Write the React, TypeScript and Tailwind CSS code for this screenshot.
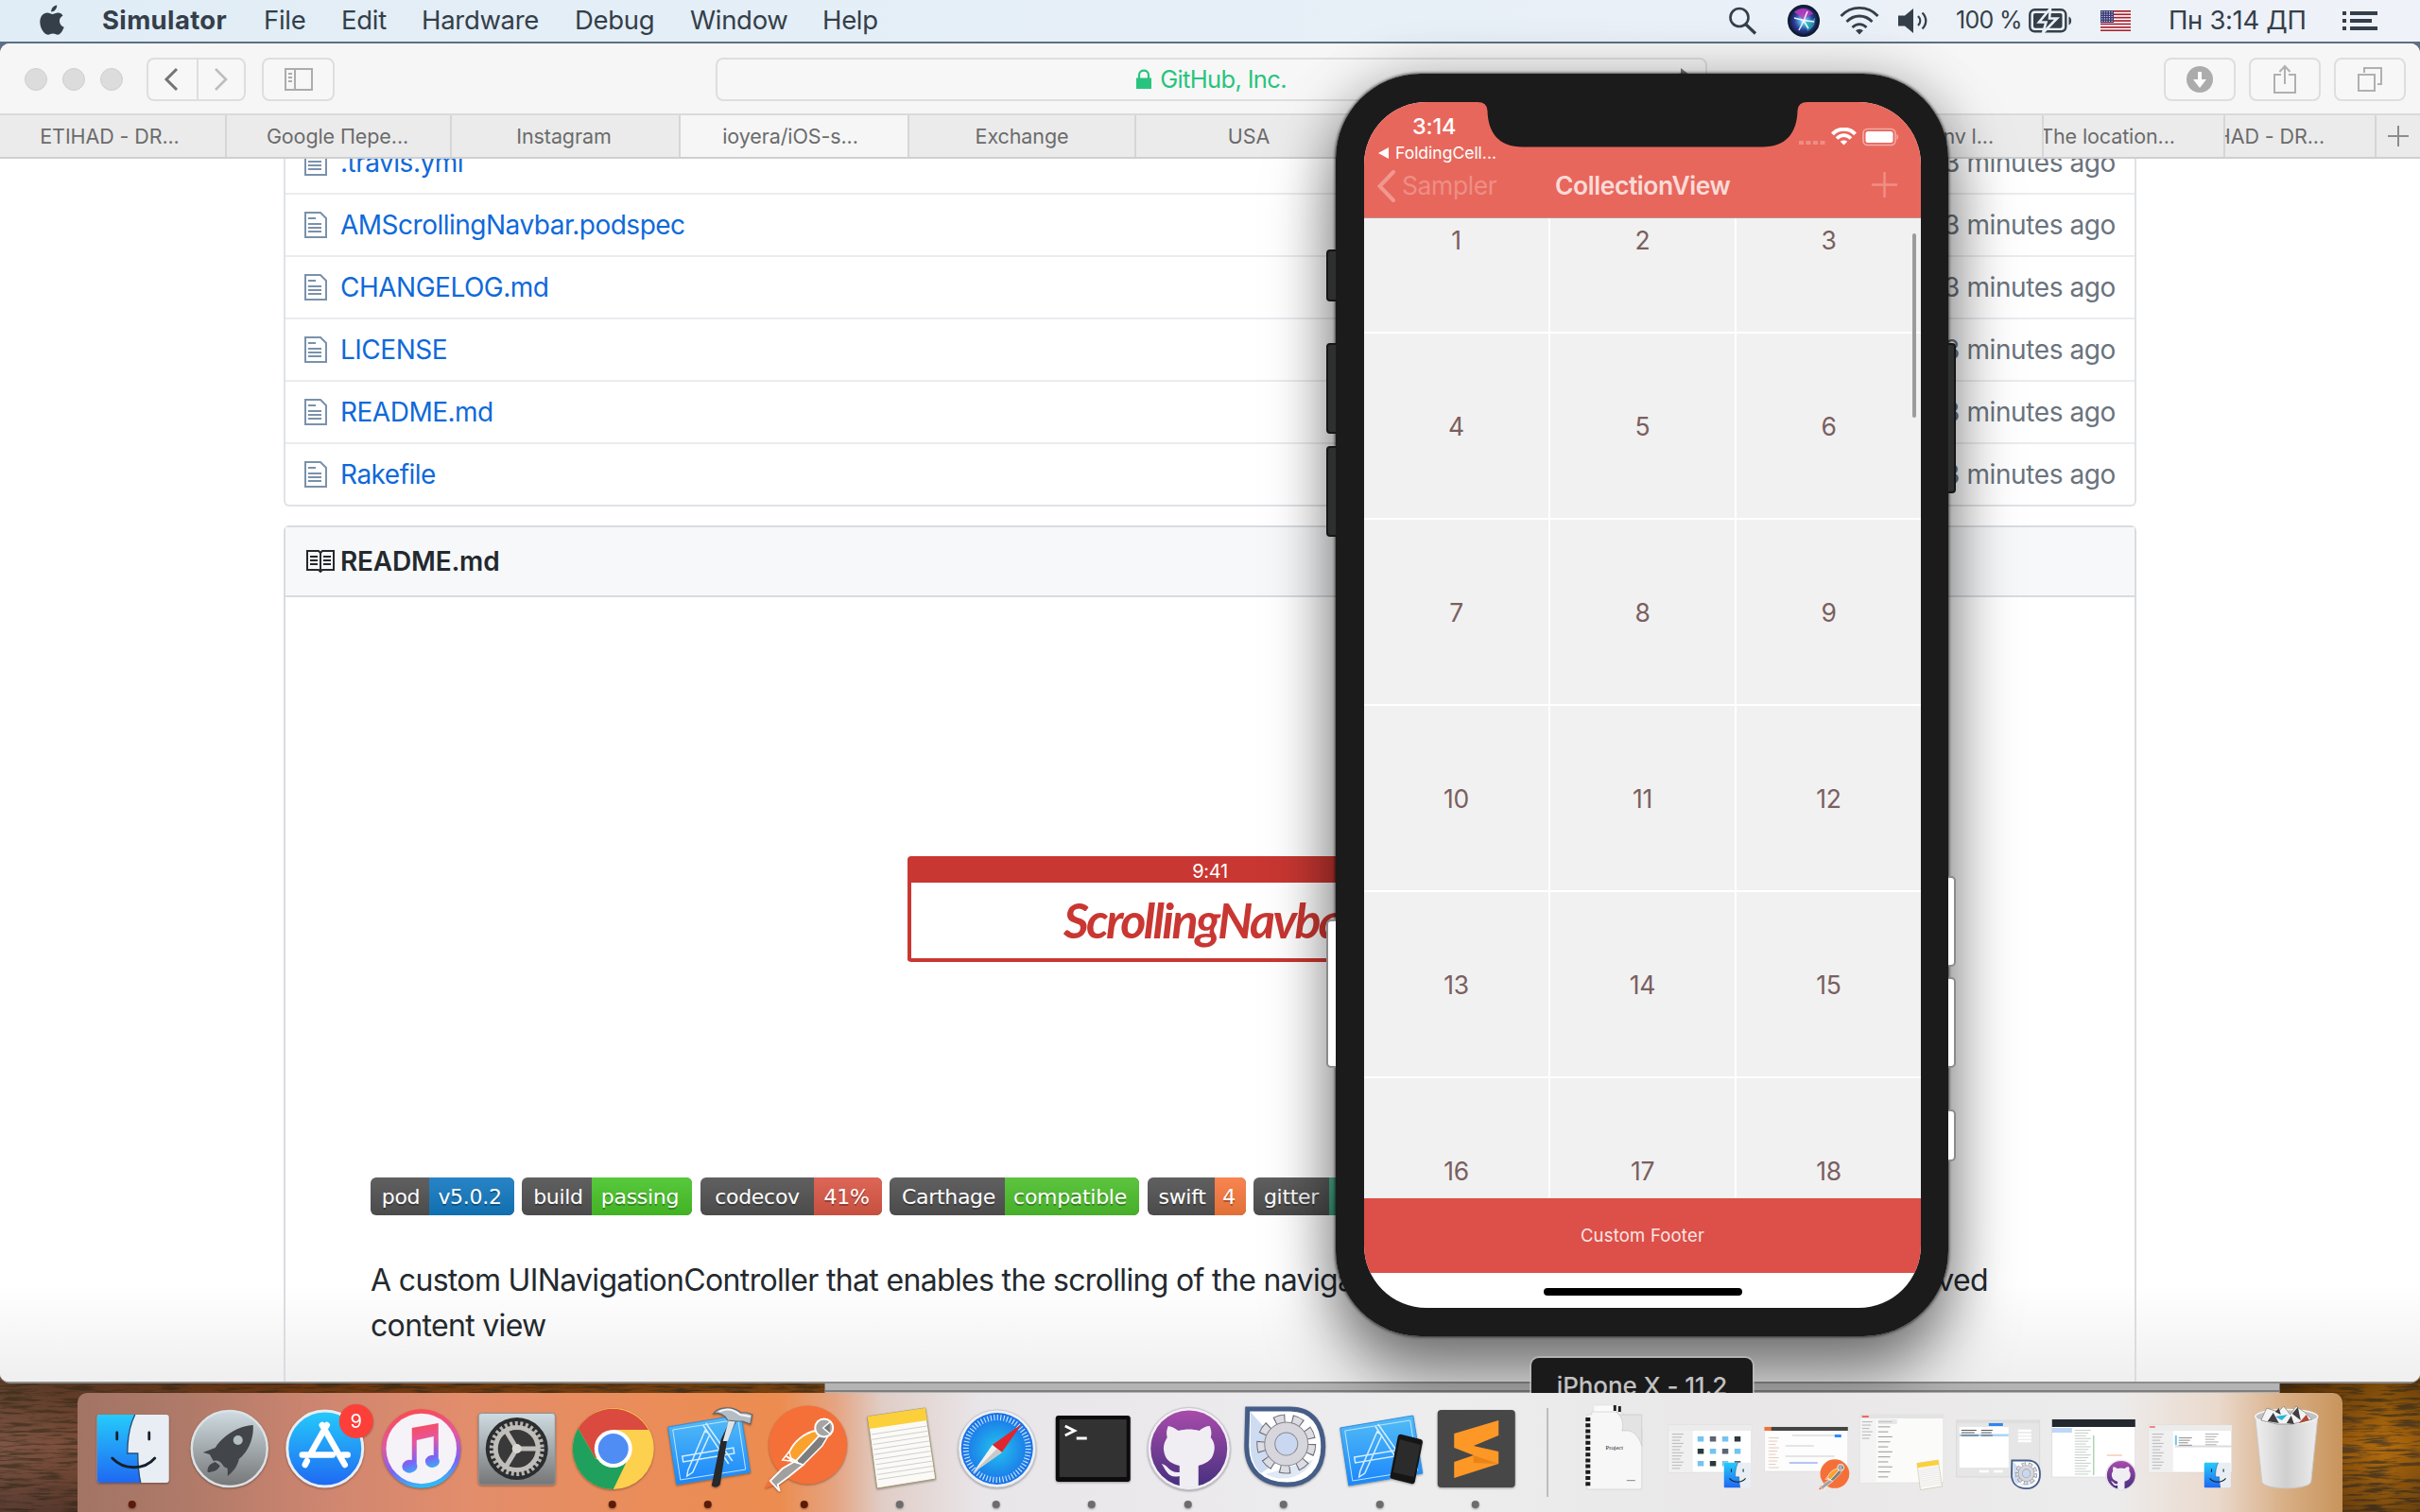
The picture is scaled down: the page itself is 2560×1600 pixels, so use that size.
import React from "react";

const files = [
  ".travis.yml",
  "AMScrollingNavbar.podspec",
  "CHANGELOG.md",
  "LICENSE",
  "README.md",
  "Rakefile",
];

const menus = [
  { label: "File", cls: "w-[82px]" },
  { label: "Edit", cls: "w-[85px]" },
  { label: "Hardware", cls: "w-[162px]" },
  { label: "Debug", cls: "w-[122px]" },
  { label: "Window", cls: "w-[140px]" },
  { label: "Help", cls: "w-[80px]" },
];

function MenuBar() {
  return (
    <div className="relative flex h-[46px] items-center border-b-2 border-[#5d6f84] bg-linear-to-r from-[#e1edf6] via-[#e6eff7] to-[#eff2f8] text-[27.5px] tracking-[-0.3px] text-[#343f4a]">
      <svg className="ml-[41px] h-[34px] w-[28px] shrink-0" viewBox="0 0 28 34" fill="#343f4a">
        <path d="M19.2 0.5c.3 3.600-2.700 7-6 7-.5-3.300 2.700-6.700 6-7z" />
        <path d="M25.500 11.500c-2.300 1.400-3.600 3.200-3.500 6 .1 3 1.800 5 4.700 6.200-1.200 3.200-3.600 8-6.700 8-2 0-2.700-1.200-5-1.200s-3.200 1.200-5 1.200C6.300 31.700 1.300 25.500 1.300 18.200c0-6 3.700-9.700 7.700-9.700 2.300 0 4 1.500 5.600 1.500 1.500 0 3.400-1.600 6.100-1.500 2 .1 3.700 1 4.800 3z" />
      </svg>
      <span className="ml-[39px] w-[171px] font-bold tracking-[0.35px]">Simulator</span>
      {menus.map((m) => (
        <span key={m.label} className={m.cls}>
          {m.label}
        </span>
      ))}
      <div className="ml-auto flex items-center">
        <svg className="h-[30px] w-[32px]" viewBox="0 0 32 30" fill="none" stroke="#343f4a" strokeWidth="2.600">
          <circle cx="13" cy="11.500" r="9.500" />
          <path d="M19.500 18.500 30 28.500" strokeWidth="3.200" />
        </svg>
        <svg className="ml-[32px] h-[34px] w-[34px]" viewBox="0 0 34 34">
          <defs>
            <radialGradient id="siri" cx="0.5" cy="0.5" r="0.5">
              <stop offset="0" stopColor="#e8f6ff" />
              <stop offset="0.25" stopColor="#4fb6e8" />
              <stop offset="0.600" stopColor="#2f3f9c" />
              <stop offset="1" stopColor="#0f1838" />
            </radialGradient>
          </defs>
          <circle cx="17" cy="17" r="16" fill="url(#siri)" stroke="#101c30" strokeWidth="2" />
          <path d="M7 8c6-6 16-5 20 2-5 1-8 4-10 7-3-4-6-7-10-9z" fill="#c03ac0" opacity="0.850" />
          <path d="M17 17c4 1 8 0 12-3 1 6-3 12-8 14-2-3-3-7-4-11z" fill="#2fc8b8" opacity="0.600" />
          <path d="M7 14 17 16.500 28 18M21 7 17 17 12 27M17 17l5 8" stroke="#fff" strokeWidth="1.500" opacity="0.900" fill="none" />
        </svg>
        <svg className="ml-[20px] h-[32px] w-[44px]" viewBox="0 0 44 32" fill="none" stroke="#343f4a" strokeWidth="2.800">
          <path d="M2.500 11C13 -0.500 31 -0.500 41.500 11" />
          <path d="M8.500 17c7.500-8 19.500-8 27 0" />
          <path d="M14.500 23c4.500-4.500 10.500-4.500 15 0" />
          <path d="M22 30.500l-4-4.200c2.500-2 5.500-2 8 0z" fill="#343f4a" stroke="none" />
        </svg>
        <svg className="ml-[18px] h-[28px] w-[36px]" viewBox="0 0 36 28">
          <path d="M1 8.500h7L17 1v26L8 19.500H1z" fill="#343f4a" />
          <path d="M22 9c3 3 3 7 0 10M26.500 5.500c5 5 5 12 0 17" fill="none" stroke="#343f4a" strokeWidth="2.300" />
        </svg>
        <span className="ml-[26px] w-[77px] text-[25px] tracking-[-0.7px] whitespace-nowrap">100 %</span>
        <svg className="h-[26px] w-[48px]" viewBox="0 0 48 26">
          <rect x="1.300" y="1.300" width="38" height="23" rx="5" fill="none" stroke="#343f4a" strokeWidth="2.400" />
          <rect x="5" y="5" width="30.500" height="15.800" rx="2" fill="#343f4a" />
          <path d="M42.500 8.500c3.500 1 3.500 8 0 9z" fill="#343f4a" />
          <path d="M23 0 11 14.500h7.500L15 26l15-15.500h-8z" fill="#343f4a" stroke="#eaf0f7" strokeWidth="2.600" />
        </svg>
        <svg className="ml-[28px] h-[22px] w-[32px]" viewBox="0 0 32 22">
          <rect width="32" height="22" fill="#fff" />
          {[0, 1, 2, 3, 4, 5, 6].map((i) => (
            <rect key={i} y={i * 3.4} width="32" height="1.700" fill="#a8202f" />
          ))}
          <rect width="14" height="13" fill="#3a3a78" />
          {[0, 1, 2, 3, 4].map((r) =>
            [0, 1, 2, 3, 4].map((c) => <circle key={`${r}-${c}`} cx={1.7 + c * 2.6} cy={1.7 + r * 2.4} r="0.600" fill="#fff" />)
          )}
        </svg>
        <span className="ml-[40px] w-[184px] text-[27.5px] tracking-[-0.35px] whitespace-nowrap">Пн 3:14 ДП</span>
        <svg className="mr-[45px] h-[22px] w-[37px]" viewBox="0 0 37 22" fill="#343f4a">
          <path d="M0 1h4v4H0zM0 9h4v4H0zM0 17h4v4H0zM8 1h29v4H8zM8 9h23v4H8zM8 17h29v4H8z" />
        </svg>
      </div>
    </div>
  );
}

function Toolbar() {
  const btn = "flex h-[46px] items-center justify-center rounded-[8px] border-2 border-[#dedede] bg-[#f7f7f7]";
  return (
    <div className="relative flex h-[74px] items-center bg-[#f6f6f6] pt-[2px]">
      <div className="ml-[26px] flex gap-[16px]">
        {[0, 1, 2].map((i) => (
          <div key={i} className="h-[24px] w-[24px] rounded-full border border-[#cfcfcf] bg-[#dcdcdc]" />
        ))}
      </div>
      <div className={`${btn} ml-[25px] w-[53px] rounded-r-none border-r-0 pr-[3px]`}>
        <svg className="h-[26px] w-[16px]" viewBox="0 0 16 26" fill="none" stroke="#747474" strokeWidth="3">
          <path d="M14 2 3 13l11 11" />
        </svg>
      </div>
      <div className={`${btn} w-[52px] rounded-l-none`}>
        <svg className="h-[26px] w-[16px]" viewBox="0 0 16 26" fill="none" stroke="#bdbdbd" strokeWidth="2.600">
          <path d="m2 2 11 11L2 24" />
        </svg>
      </div>
      <div className={`${btn} ml-[17px] w-[77px]`}>
        <svg className="h-[24px] w-[30px]" viewBox="0 0 30 24" fill="none" stroke="#acacac" strokeWidth="2">
          <path d="M1 1h28v22H1zM11 1v22M4 6h4M4 10h4M4 14h4" />
        </svg>
      </div>
      <div className={`${btn} absolute top-[15px] left-[757px] w-[1049px] text-[25.5px] tracking-[-0.65px] text-[#28c47d]`}>
        <svg className="mr-[9px] h-[22px] w-[16px]" viewBox="0 0 16 22">
          <path d="M0 9.500h16V21H0z" fill="#28c47d" />
          <path d="M3 10V6.500C3 0 13 0 13 6.500V10" fill="none" stroke="#28c47d" strokeWidth="2.200" />
        </svg>
        GitHub, Inc.
        <svg className="absolute top-[8px] right-[16px] h-[22px] w-[20px]" viewBox="0 0 20 22">
          <path d="M10 1l9 7-9 7z" fill="#777" />
          <path d="M12 7.500c-6 0-10 4-10 9" fill="none" stroke="#777" strokeWidth="2.600" />
        </svg>
      </div>
      <div className="mr-[15px] ml-auto flex gap-[14px]">
        <div className={`${btn} w-[76px]`}>
          <svg className="h-[28px] w-[28px]" viewBox="0 0 28 28">
            <circle cx="14" cy="14" r="14" fill="#acacac" />
            <path d="M12 6h4v8h5l-7 9-7-9h5z" fill="#fff" />
          </svg>
        </div>
        <div className={`${btn} w-[76px]`}>
          <svg className="h-[32px] w-[24px]" viewBox="0 0 24 32" fill="none" stroke="#b0b0b0" strokeWidth="2">
            <path d="M8 11H1v19h22V11h-7M12 21V2M6.500 8 12 2l5.500 6" />
          </svg>
        </div>
        <div className={`${btn} w-[76px]`}>
          <svg className="h-[26px] w-[26px]" viewBox="0 0 26 26" fill="none" stroke="#b0b0b0" strokeWidth="2">
            <path d="M1 8h17v17H1zM7 6V1h18v17h-4" />
          </svg>
        </div>
      </div>
    </div>
  );
}

function TabBar() {
  const tab = "flex h-full shrink-0 items-center justify-center overflow-hidden whitespace-nowrap border-r-2 border-[#d6d6d6]";
  return (
    <div className="flex h-[48px] border-y-2 border-t-[#dadada] border-b-[#cfcfcf] bg-[#ebebeb] text-[21.5px] tracking-[-0.1px] text-[#6b6b6b]">
      <div className={`${tab} w-[240px] pr-[6px]`}>ETIHAD - DR...</div>
      <div className={`${tab} w-[238px] pr-[2px]`}>Google Пере...</div>
      <div className={`${tab} w-[242px] pr-[3px]`}>Instagram</div>
      <div className={`${tab} w-[242px] bg-[#f6f6f6] pr-[8px]`}>ioyera/iOS-s...</div>
      <div className={`${tab} w-[240px]`}>Exchange</div>
      <div className={`${tab} w-[240px]`}>USA</div>
      <div className={`${tab} w-[720px] justify-end pr-[51px]`}>env l...</div>
      <div className={`${tab} w-[192px] pr-[55px]`}>The location...</div>
      <div className={`${tab} w-[160px] justify-end pr-[53px]`}>ETIHAD - DR...</div>
      <div className="flex flex-1 items-center justify-center">
        <svg className="h-[22px] w-[22px]" viewBox="0 0 22 22" stroke="#8c8c8c" strokeWidth="2">
          <path d="M11 0v22M0 11h22" />
        </svg>
      </div>
    </div>
  );
}

function Badge({ left, right, lw, rw, color }: { left: string; right: string; lw: string; rw: string; color: string }) {
  return (
    <div className="flex h-[40px] overflow-hidden rounded-[6px] bg-linear-to-b from-[#606060] to-[#4b4b4b] font-['DejaVu_Sans'] text-[22px] tracking-[-0.3px] text-white [text-shadow:0_2px_0_rgba(0,0,0,0.3)]">
      <div className={`flex items-center justify-center ${lw}`}>{left}</div>
      <div className={`flex items-center justify-center bg-linear-to-b ${rw} ${color}`}>{right}</div>
    </div>
  );
}

function Page() {
  return (
    <div className="flex h-[1294px] flex-col overflow-hidden bg-linear-to-b from-white from-[92%] to-[#efefef] px-[300px] text-[28px]">
      <div className="mt-[-30px] shrink-0 rounded-b-[6px] border-2 border-t-0 border-[#dfe2e5]">
        {files.map((f) => (
          <div key={f} className="flex h-[66px] items-center border-t-2 border-[#eaecef] pr-[20px] pl-[20px] last:h-[66px]">
            <svg className="h-[28px] w-[24px]" viewBox="0 0 24 28" fill="none" stroke="#7a91ab" strokeWidth="2">
              <path d="M2 1h15l6 6v20H1V1zM4 7h8M4 13h14M4 17h14M4 21h14" />
            </svg>
            <span className="ml-[14px] tracking-[-0.5px] text-[#0f69d9]">{f}</span>
            <span className="ml-auto tracking-[-0.4px] text-[#6a737d]">3 minutes ago</span>
          </div>
        ))}
      </div>
      <div className="mt-[20px] flex flex-1 shrink-0 flex-col rounded-t-[6px] border-2 border-b-0 border-[#d9dcdf]">
        <div className="flex h-[74px] items-center border-b-2 border-[#d9dcdf] bg-[#f6f8fa] pl-[22px]">
          <svg className="h-[24px] w-[30px]" viewBox="0 0 30 24" fill="none" stroke="#24292e" strokeWidth="2">
            <path d="M1 1h12l2 2 2-2h12v20H17l-2 2-2-2H1zM15 3v19M4 7h8M4 11h8M4 15h8M18 7h8M18 11h8M18 15h8" />
          </svg>
          <span className="ml-[6px] font-semibold tracking-[-0.2px] text-[#24292e]">README.md</span>
        </div>
        <div className="mt-[274px] flex h-[112px] w-[640px] shrink-0 flex-col self-center rounded-[4px] border-4 border-t-0 border-[#c93732] bg-white">
          <div className="flex h-[28px] items-center justify-center bg-[#c93732] pt-[3px] text-[20px] tracking-[-0.3px] text-white">9:41</div>
          <div className="flex flex-1 items-center justify-center pb-[2px] font-['Lato'] text-[52px] leading-none font-bold tracking-[-2.6px] text-[#c93732] italic">ScrollingNavbar</div>
        </div>
        <div className="mt-[228px] ml-[90px] flex">
          <Badge left="pod" right="v5.0.2" lw="w-[62px] pl-[2px]" rw="w-[90px] pr-[4px]" color="from-[#2884c6] to-[#106fae]" />
          <div className="w-[8px]" />
          <Badge left="build" right="passing" lw="w-[74px] pl-[3px]" rw="w-[106px] pr-[4px]" color="from-[#58c83c] to-[#42b224]" />
          <div className="w-[9px]" />
          <Badge left="codecov" right="41%" lw="w-[120px]" rw="w-[72px] pr-[3px]" color="from-[#dd6657] to-[#c65040]" />
          <div className="w-[8px]" />
          <Badge left="Carthage" right="compatible" lw="w-[122px] pl-[3px]" rw="w-[142px] pr-[4px]" color="from-[#5cc43e] to-[#48ae2a]" />
          <div className="w-[9px]" />
          <Badge left="swift" right="4" lw="w-[71px] pl-[2px]" rw="w-[33px] pr-[3px]" color="from-[#f9844f] to-[#e07038]" />
          <div className="w-[8px]" />
          <Badge left="gitter" right="join chat" lw="w-[80px]" rw="w-[110px]" color="from-[#4fb393] to-[#3b9c7c]" />
        </div>
        <p className="mt-[45px] ml-[90px] w-[1776px] text-[32px] leading-[48px] tracking-[-0.66px] text-[#24292e]">
          A custom UINavigationController that enables the scrolling of the navigation bar alongside the scrolling of an observed content view
        </p>
      </div>
    </div>
  );
}

function Phone() {
  return (
    <div className="absolute top-[78px] left-[1413px] h-[1336px] w-[648px]">
      <div className="absolute inset-0 rounded-[90px] shadow-[0_0_3px_1px_rgba(0,0,0,0.6),0_40px_70px_rgba(0,0,0,0.5),0_0_60px_rgba(0,0,0,0.2)]" />
      <div className="absolute top-[186px] left-[-10px] h-[55px] w-[14px] rounded-[4px] border-2 border-[#161616] bg-[#2e2f2f]" />
      <div className="absolute top-[285px] left-[-10px] h-[96px] w-[14px] rounded-[4px] border-2 border-[#161616] bg-[#2e2f2f]" />
      <div className="absolute top-[394px] left-[-10px] h-[96px] w-[14px] rounded-[4px] border-2 border-[#161616] bg-[#2e2f2f]" />
      <div className="absolute top-[285px] right-[-8px] h-[159px] w-[14px] rounded-[4px] border-2 border-[#161616] bg-[#2e2f2f]" />
      <div className="absolute top-[895px] left-[-10px] h-[157px] w-[20px] rounded-[5px] border-2 border-[#8a8a8a] bg-white" />
      <div className="absolute top-[849px] right-[-8px] h-[96px] w-[20px] rounded-[5px] border-2 border-[#8a8a8a] bg-white" />
      <div className="absolute top-[956px] right-[-8px] h-[96px] w-[20px] rounded-[5px] border-2 border-[#8a8a8a] bg-white" />
      <div className="absolute top-[1096px] right-[-8px] h-[55px] w-[20px] rounded-[5px] border-2 border-[#8a8a8a] bg-white" />
      <div className="relative h-full rounded-[90px] bg-[#1b1b1b] px-[30px] pt-[30px]">
        <div className="relative flex h-[1276px] w-[589px] flex-col overflow-hidden rounded-[66px] bg-white">
          <svg className="absolute top-0 left-0 z-10 h-[48px] w-[589px]" viewBox="0 0 589 48">
            <path d="M120 -1v1Q130 0 130.500 9C131 32 142 47.500 168 47.500H421C447 47.500 458 32 458.500 9Q459 0 469 0v-1z" fill="#1b1b1b" />
          </svg>
          <div className="flex h-[123px] shrink-0 flex-col border-b border-[#b9948f] bg-[#e8675c] text-white">
            <div className="flex h-[41px] items-end">
              <span className="ml-[51px] text-[23.5px] leading-[30px] font-medium tracking-[-0.2px]">3:14</span>
              <svg className="mr-[23px] mb-[-6px] ml-auto h-[20px] w-[106px]" viewBox="0 0 106 20">
                <path d="M0 14h5v4H0zM7.500 14h5v4h-5zM15 14h5v4h-5zM22.500 14h5v4h-5z" fill="#f2a69f" opacity="0.600" />
                <path d="M35.500 6.800C42 0 53 0 59.500 6.800" fill="none" stroke="#fff" strokeWidth="4" />
                <path d="M40 11.500c4.500-4.500 10.500-4.500 15 0" fill="none" stroke="#fff" strokeWidth="3.600" />
                <path d="M47.500 18.500 43.700 14.800c2.200-1.800 5.400-1.800 7.600 0z" fill="#fff" />
                <rect x="68" y="1.500" width="34" height="17" rx="4.500" fill="none" stroke="#f3aca6" strokeWidth="1.600" />
                <rect x="70.500" y="4" width="29" height="12" rx="2.500" fill="#fff" />
                <path d="M103.500 7c2 .5 2 5.500 0 6z" fill="#f3aca6" />
              </svg>
            </div>
            <div className="flex h-[26px] items-center pl-[15px] text-[17.5px] tracking-[0px]">
              <svg className="mr-[7px] h-[12px] w-[11px]" viewBox="0 0 11 12">
                <path d="M11 0v12L0 6z" fill="#fff" />
              </svg>
              FoldingCell...
            </div>
            <div className="relative flex h-[44px] items-center">
              <svg className="ml-[14px] h-[34px] w-[19px]" viewBox="0 0 19 34" fill="none" stroke="#f0988f" strokeWidth="4" strokeLinecap="round">
                <path d="M17 2 2.500 17 17 32" />
              </svg>
              <span className="ml-[7px] w-[162px] text-[26.5px] tracking-[-0.4px] text-[#ee8e86]">Sampler</span>
              <span className="text-[26.5px] font-semibold tracking-[-0.45px] whitespace-nowrap text-[#fadbd8]">CollectionView</span>
              <svg className="absolute top-[7px] right-[25px] h-[27px] w-[27px]" viewBox="0 0 27 27" stroke="#f08f86" strokeWidth="2.400">
                <path d="M13.500 0v27M0 13.500h27" />
              </svg>
            </div>
          </div>
          <div className="relative h-[1037px] shrink-0 overflow-hidden bg-white">
            <div className="mt-[-75px] grid grid-cols-3 gap-x-[2px]">
              {Array.from({ length: 18 }, (_, i) => (
                <div key={i} className="flex h-[197px] items-center justify-center border-b-2 border-white bg-[#f1f1f1] pt-[2px] text-[26.5px] tracking-[-0.3px] text-[#7a5f5f]">
                  {i + 1}
                </div>
              ))}
            </div>
            <div className="absolute top-[16px] right-[5px] h-[195px] w-[4px] rounded-full bg-[#9c9c9c]" />
          </div>
          <div className="flex h-[79px] shrink-0 items-center justify-center bg-[#dd4f49] pt-[1px] text-[18.5px] tracking-[0.2px] text-[#fbe6e4]">Custom Footer</div>
          <div className="mt-[16px] h-[8px] w-[210px] shrink-0 self-center rounded-full bg-black" />
        </div>
      </div>
    </div>
  );
}

function Xcode() {
  return (
    <g>
      <path d="M-43 1510 L34 1497 L44 1558 L-34 1571Z" fill="url(#blue)" stroke="#2f8fe0" />
      <path d="M-38 1513 L31 1502 L39 1555 L-30 1566Z" fill="none" stroke="#bfe4ff" strokeWidth="1" />
      <path d="M-28 1541 L26 1532 L27 1538 L-27 1547Z M-6 1508 L21 1549 M-3 1506 L25 1546 M-4 1514 L-22 1556 L-23 1562 L-17 1558 L1 1518Z" fill="none" stroke="#d5eeff" strokeWidth="1.500" />
    </g>
  );
}

const finder = (
  <g>
    <rect x="-38" y="1497" width="76" height="72" rx="3" fill="#e9eef5" />
    <path d="M-35 1497H2C-4 1509-6 1523-6 1538H5C5 1549 6 1560 8 1569H-35Q-38 1569-38 1566V1500Q-38 1497-35 1497Z" fill="url(#finderb)" />
    <path d="M2 1497C-4 1509-6 1523-6 1538H5C5 1549 6 1560 8 1569" fill="none" stroke="#24507c" strokeWidth="1.400" />
    <path d="M-17 1516v7M17 1516v7M-22 1543C-10 1556 12 1556 23 1543" fill="none" stroke="#16202c" strokeWidth="2.800" strokeLinecap="round" />
  </g>
);

const postman = (
  <g>
    <circle cx="3" cy="1529" r="41.500" fill="#f47038" />
    <path d="M-43 1575 -36 1563-28 1570Z" fill="#f47038" />
    <path d="M-10 1546 16 1517 24 1520 18 1530-3 1551Z" fill="#7d7d7d" stroke="#fff" strokeWidth="1.500" />
    <path d="M-17 1537C-12 1525 0 1516 11 1514L17 1517-10 1546-17 1542Z" fill="#fba12e" stroke="#fff" strokeWidth="1.800" />
    <path d="M-20 1541-14 1546-17 1536-24 1545-8 1547Z" fill="#f47038" stroke="#fff" strokeWidth="1.500" />
    <path d="M-12 1547-2 1550-18 1563-29 1571-27 1578-37 1567-24 1554Z" fill="#a0a0a0" stroke="#fff" strokeWidth="1.800" />
    <circle cx="20" cy="1511" r="9.500" fill="#a5a5a5" stroke="#fff" strokeWidth="2" />
    <path d="M26 1505 19 1511 26 1517" fill="#777" stroke="#fff" strokeWidth="1.500" />
  </g>
);

const notes = (
  <g>
    <path d="M-35 1499 26 1490 37 1565-25 1575Z" fill="#fbfaf6" stroke="#a59a76" strokeWidth="1" />
    <path d="M-35 1499 26 1490 28 1503-33 1512Z" fill="#fbd03a" />
    {[0, 1, 2, 3, 4, 5, 6, 7, 8, 9].map((i) => (
      <path key={i} d={`M${-31 + i * 0.8} ${1518 + i * 5.3} ${28 + i * 0.8} ${1509 + i * 5.3}`} stroke="#cfcfd2" strokeWidth="1" />
    ))}
  </g>
);

const github = (
  <g>
    <circle cx="0" cy="1533" r="43.500" fill="#f2f0f4" stroke="#c9c3d0" strokeWidth="1" />
    <circle cx="0" cy="1533" r="40.500" fill="url(#ghp)" />
    <path d="M-22 1509C-16 1510-13 1513-11 1514C-4 1512 4 1512 11 1514C14 1511 18 1509 22 1509C24 1514 24 1518 23 1521C27 1526 28 1532 26 1538C24 1546 17 1549 10 1551V1573Q0 1575-10 1573V1562C-22 1565-24 1556-29 1549C-22 1550-21 1559-10 1558V1551C-18 1549-24 1546-26 1538C-28 1531-26 1526-23 1521C-24 1518-24 1514-22 1509Z" fill="#f0eef3" />
  </g>
);

const gearApp = (
  <g>
    <path d="M-39 1491H6C30 1491 41 1508 41 1531C41 1556 26 1571 3 1571C-24 1571-40 1556-40 1530Z" fill="#fff" stroke="#455d87" strokeWidth="5" />
    <path d="M-36 1494V1530C-36 1542-32 1552-25 1559L5 1540Z" fill="#b9cdec" opacity=".7" />
    <path d="M30 1545A34 30 0 0 1-20 1560Z" fill="#c9d8ee" opacity=".6" />
    <circle cx="2" cy="1528" r="25" fill="none" stroke="#6d6d78" strokeWidth="13" strokeDasharray="10.500 7.050" />
    <circle cx="2" cy="1528" r="25" fill="none" stroke="#dcdce2" strokeWidth="11" strokeDasharray="8.500 9.050" strokeDashoffset="-1" />
    <circle cx="2" cy="1528" r="17.500" fill="#c9d8f0" stroke="#85858f" strokeWidth="12" />
    <circle cx="2" cy="1528" r="17.500" fill="none" stroke="#d6d6dc" strokeWidth="10" />
  </g>
);

function Launchpad() {
  return (
    <g>
      <circle cx="0" cy="1533" r="40" fill="url(#silver)" stroke="#dbe2e5" strokeWidth="2.500" />
      <path d="M25 1508C8 1509-8 1520-15 1532L-28 1537-21 1539-17 1546C-12 1544-8 1548-6 1552L-2 1554-2 1562C6 1556 9 1549 10 1544C20 1536 26 1522 25 1508Z" fill="#42464b" />
      <circle cx="9" cy="1524" r="5" fill="#b4bfc4" />
      <path d="M-15 1547C-22 1549-24 1554-23 1558C-18 1558-12 1556-10 1551Z" fill="#42464b" />
    </g>
  );
}

function AppStore() {
  return (
    <g>
      <circle cx="0" cy="1533" r="40" fill="url(#finderb)" stroke="#e9edf2" strokeWidth="3" />
      <path d="M2 1508-15 1538M-19 1546-21 1550M-3 1508 21 1550M-24 1539.500H8M19 1539.500H24" stroke="#fff" strokeWidth="6.500" strokeLinecap="round" fill="none" />
      <circle cx="33" cy="1504" r="18" fill="#fc4039" />
      <text x="33" y="1511" textAnchor="middle" fontSize="20" fontFamily="Inter" fill="#fff">9</text>
    </g>
  );
}

function ITunes() {
  return (
    <g>
      <circle cx="0" cy="1533" r="39.500" fill="#f6f3f8" stroke="url(#itun)" strokeWidth="4.500" />
      <path d="M-10 1511 18 1506V1543A7.500 6.500 0 1 1 13 1540V1520L-5 1524V1549A8 7 0 1 1-10 1545Z" fill="url(#itun)" />
    </g>
  );
}

function Settings() {
  return (
    <g>
      <rect x="-40.500" y="1495.500" width="81" height="75.500" rx="3" fill="url(#silver)" stroke="#8f9497" />
      <circle cx="0" cy="1533" r="33" fill="#2c2d2f" />
      <circle cx="0" cy="1533" r="26.500" fill="none" stroke="#b5b3b0" strokeWidth="5" strokeDasharray="3 2.550" />
      <circle cx="0" cy="1533" r="22.500" fill="#393939" stroke="#c0bebb" strokeWidth="5" />
      <path d="M0 1533H21M0 1533-11 1515M0 1533-11 1551" stroke="#c0bebb" strokeWidth="5" />
      <circle cx="0" cy="1533" r="5" fill="#d9d7d4" />
    </g>
  );
}

function Chrome() {
  return (
    <g>
      <circle cx="0" cy="1533" r="43" fill="#fdd04d" />
      <path d="M-37.200 1511.500A43 43 0 0 1 37.200 1513H0L-18.600 1543.700Z" fill="#db4a3f" />
      <path d="M-37.200 1511.500-18.600 1543.700 14 1547 0 1576A43 43 0 0 1-37.200 1511.500Z" fill="#1fa15d" />
      <circle cx="0" cy="1533" r="20" fill="#fff" />
      <circle cx="0" cy="1533" r="16" fill="#4f8df5" />
    </g>
  );
}

function XcodeHammer() {
  return (
    <g>
      <Xcode />
      <path d="M22 1504 13 1523 3 1572Q8 1576 12 1571L19 1526 29 1504Z" fill="#26282b" />
      <path d="M22 1500 15 1525 20 1525 29 1502Z" fill="#dfe4e8" />
      <path d="M5 1496C10 1488 26 1488 34 1495L40 1495 46 1497 44 1507 36 1504 30 1504 20 1503C17 1497 11 1494 5 1496Z" fill="#b5bdc4" stroke="#5c6670" strokeWidth="1.200" />
      <path d="M11 1494C18 1490 26 1491 33 1497L44 1499" fill="none" stroke="#f3f6f8" strokeWidth="2" />
    </g>
  );
}

function Safari() {
  return (
    <g>
      <circle cx="0" cy="1533" r="41" fill="#eef1f4" stroke="#c7ccd2" strokeWidth="1" />
      <circle cx="0" cy="1533" r="38" fill="url(#saf)" />
      <circle cx="0" cy="1533" r="33" fill="none" stroke="#cfeaff" strokeWidth="6" strokeDasharray="1.100 2.350" />
      <path d="M26 1507-5 1529 5 1537Z" fill="#e0262c" />
      <path d="M-26 1559-5 1529 5 1537Z" fill="#f1f1f1" />
      <path d="M-26 1559 0 1533 5 1537Z" fill="#c9c9c9" />
    </g>
  );
}

function Terminal() {
  return (
    <g>
      <rect x="-39" y="1498" width="79" height="70" rx="3" fill="#0c0c0c" />
      <rect x="-35" y="1502" width="71" height="61" fill="#323232" />
      <path d="M-29 1509-19 1514-29 1519M-17 1522H-6" stroke="#fff" strokeWidth="2.800" fill="none" />
    </g>
  );
}

function SimulatorIcon() {
  return (
    <g>
      <g transform="translate(0 1)">
        <Xcode />
      </g>
      <path d="M22 1518 42 1523Q45 1524 44 1527L36 1568Q35 1571 32 1570L12 1565Q9 1564 10 1561L18 1520Q19 1517 22 1518Z" fill="#151515" />
      <path d="M20 1523 42 1529 35 1563 13 1558Z" fill="#2b2b2b" />
    </g>
  );
}

function Sublime() {
  return (
    <g>
      <rect x="-41" y="1492" width="82" height="82" rx="4" fill="#474747" />
      <path d="M23.500 1503V1519L-3 1530 23.500 1536V1549L-23.500 1564V1547L-3 1540-23.500 1532V1517Z" fill="#fd9827" />
      <path d="M-3 1540 23.500 1549-3 1548Z" fill="#e07c12" opacity="0.700" />
    </g>
  );
}

const apps: { node: React.ReactNode; dot: boolean }[] = [
  { node: finder, dot: true },
  { node: <Launchpad />, dot: false },
  { node: <AppStore />, dot: false },
  { node: <ITunes />, dot: false },
  { node: <Settings />, dot: false },
  { node: <Chrome />, dot: true },
  { node: <XcodeHammer />, dot: true },
  { node: postman, dot: true },
  { node: notes, dot: true },
  { node: <Safari />, dot: true },
  { node: <Terminal />, dot: true },
  { node: github, dot: true },
  { node: gearApp, dot: true },
  { node: <SimulatorIcon />, dot: true },
  { node: <Sublime />, dot: true },
];

const mini = (node: React.ReactNode) => <g transform="translate(29 1561) scale(0.37) translate(0 -1533)">{node}</g>;

function Lines({ x, y, n, step, w, color }: { x: number; y: number; n: number; step: number; w: number; color: string }) {
  return (
    <g fill={color}>
      {Array.from({ length: n }, (_, i) => (
        <rect key={i} x={x} y={y + i * step} width={w - (i % 3) * w * 0.15} height="1.100" />
      ))}
    </g>
  );
}

const documentStack = (
  <g>
    <path d="M-22 1487H6V1496H-22Z" fill="#fafafa" stroke="#ddd" strokeWidth="0.500" />
    <path d="M-24 1494H6L29 1512V1576H-29V1497H-24Z" fill="#f7f7f7" stroke="#c9c9c9" strokeWidth="0.600" />
    <path d="M2 1494C9 1500 10 1508 8 1514L14 1514C20 1514 26 1520 29 1530V1497H6Z" fill="#e3e3e3" stroke="#bdbdbd" strokeWidth="0.500" />
    <path d="M-1 1487h3v6h-3zM4 1488h3v6H4z" fill="#222" />
    <path d="M-28 1500V1574" stroke="#1a1a1a" strokeWidth="5" strokeDasharray="4 2.200" />
    <text x="0" y="1534" textAnchor="middle" fontSize="6.500" fontFamily="Liberation Serif" fill="#222">Project</text>
    <rect x="13" y="1566" width="9" height="1.200" fill="#999" />
  </g>
);

const finderWindow = (
  <g>
    <rect x="-44" y="1508" width="88" height="50" fill="#fff" stroke="#d6d6d6" strokeWidth="0.600" />
    <rect x="-44" y="1508" width="88" height="6" fill="#ececec" />
    <rect x="-44" y="1514" width="26" height="44" fill="#f0f0f0" />
    <Lines x={-40} y={1517} n={12} step={3.3} w={12} color="#bdbdbd" />
    {[0, 1, 2].map((r) =>
      [0, 1, 2, 3].map((c) => (
        <rect key={`${r}${c}`} x={-13 + c * 13} y={1520 + r * 13} width="6.500" height="5.500" fill={(r * 3 + c) % 4 === 3 ? "#2b3a3a" : (r + c) % 2 ? "#5a6570" : "#74c4f0"} />
      ))
    )}
    {mini(finder)}
  </g>
);

const postmanWindow = (
  <g>
    <rect x="-44" y="1510" width="88" height="47" fill="#fdfdfd" stroke="#ddd" strokeWidth="0.600" />
    <rect x="-44" y="1510" width="88" height="4" fill="#444" />
    <rect x="-44" y="1510" width="7" height="4" fill="#f47038" />
    <Lines x={-40} y={1521} n={10} step={3.5} w={11} color="#e9cfc1" />
    <path d="M-15 1519H30M-22 1530H8M-22 1541H30" stroke="#ccc" strokeWidth="1" />
    <path d="M-18 1548H12" stroke="#8a9df0" strokeWidth="1.200" />
    <rect x="30" y="1518" width="7" height="3" fill="#2b8cff" />
    {mini(postman)}
  </g>
);

const notesWindow = (
  <g>
    <rect x="-44" y="1497" width="88" height="72" fill="#fbfbf9" stroke="#dcdcdc" strokeWidth="0.600" />
    <rect x="-44" y="1497" width="88" height="4" fill="#e3e3e3" />
    <rect x="-44" y="1501" width="17" height="68" fill="#f4f4f4" />
    <path d="M-42 1499h7" stroke="#e66" strokeWidth="2" />
    <Lines x={-42} y={1504} n={6} step={3.5} w={11} color="#bbb" />
    <Lines x={-25} y={1504} n={12} step={5.3} w={15} color="#a2a2a2" />
    <rect x="-25" y="1502" width="20" height="5" fill="#d8d8d8" opacity="0.600" />
    {mini(notes)}
  </g>
);

const managerWindow = (
  <g>
    <rect x="-44" y="1503" width="88" height="60" fill="#e6e6e6" stroke="#cfcfcf" strokeWidth="0.600" />
    <rect x="-44" y="1503" width="88" height="3" fill="#dedede" />
    <rect x="-10" y="1506" width="15" height="3" fill="#2d86f0" />
    <rect x="-41" y="1510" width="52" height="43" fill="#fff" />
    <rect x="-41" y="1517.500" width="52" height="2.500" fill="#a9d3f8" />
    <path d="M-39 1513.500h16M-18 1513.500h12M-39 1516h14M-18 1516h11M-39 1519h18M-18 1519h12" stroke="#555" strokeWidth="1" />
    <path d="M21 1514h14M21 1518h14M21 1521.500h14M21 1525h14M-20 1557h10M-5 1557h10" stroke="#fff" strokeWidth="2.400" />
    {mini(gearApp)}
  </g>
);

const githubWindow = (
  <g>
    <rect x="-44" y="1502" width="88" height="61" fill="#fff" stroke="#d6d6d6" strokeWidth="0.600" />
    <rect x="-44" y="1502" width="88" height="8" fill="#22282e" />
    <rect x="-44" y="1511" width="21" height="5" fill="#bcd8f5" />
    <Lines x={-20} y={1513} n={17} step={2.9} w={17} color="#c9d3cc" />
    <path d="M0 1519V1561" stroke="#7cc58c" strokeWidth="1" />
    <path d="M14 1540H30" stroke="#f5b38c" strokeWidth="1" />
    {mini(github)}
  </g>
);

const listWindow = (
  <g>
    <rect x="-44" y="1508" width="88" height="50" fill="#fff" stroke="#d6d6d6" strokeWidth="0.600" />
    <rect x="-44" y="1508" width="88" height="6" fill="#ececec" />
    <path d="M-43 1510h6" stroke="#e66" strokeWidth="1.600" />
    <rect x="-44" y="1514" width="26" height="44" fill="#f0f0f0" />
    <Lines x={-40} y={1517} n={12} step={3.3} w={12} color="#bdbdbd" />
    <path d="M-16 1530.500h60" stroke="#dcdcdc" strokeWidth="2" />
    <Lines x={-12} y={1521} n={4} step={2.6} w={14} color="#999" />
    <Lines x={16} y={1517} n={5} step={2.8} w={14} color="#b5b5b5" />
    <path d="M-15 1519v10" stroke="#74c4f0" strokeWidth="2" />
    {mini(finder)}
  </g>
);

const trash = (
  <g>
    <path d="M-33 1500-26 1568C-24 1577 24 1577 26 1568L33 1500Z" fill="url(#can)" stroke="#c9c9cb" strokeWidth="1" />
    <ellipse cx="0" cy="1499" rx="33" ry="7.500" fill="#c2c2c6" stroke="#f5f5f5" strokeWidth="1.500" />
    <path d="M-27 1503-21 1490-9 1494-3 1488 4 1497 10 1488 20 1495 27 1502 6 1507-10 1507Z" fill="#f3f3f3" stroke="#888" strokeWidth="0.800" />
    <path d="M-20 1504-14 1495-8 1506ZM6 1496 12 1489 15 1503ZM-12 1494-8 1490-6 1497ZM0 1506 5 1498 8 1507Z" fill="#3f3f42" />
    <path d="M-12 1499 1 1497-5 1503Z" fill="#28b5d8" />
    <path d="M13 1506 21 1497 24 1503Z" fill="#b04a34" />
  </g>
);

const minimized: React.ReactNode[] = [documentStack, finderWindow, postmanWindow, notesWindow, managerWindow, githubWindow, listWindow, trash];

function Dock() {
  return (
    <div className="absolute top-[1474px] left-[82px] flex h-[126px] w-[2396px] overflow-hidden rounded-t-[10px] bg-[linear-gradient(90deg,#a27464_0%,#b07a69_5%,#cf8670_11%,#e28d6c_17%,#ea8d5a_25%,#ec8c50_31%,#e5a583_33.500%,#e0cdc6_35.500%,#e9e6ea_40%,#ededee_60%,#e9e7e8_75%,#edecec_90%,#ead9cc_94.500%,#d8ae84_97.500%,#c8945c_100%)]">
      <svg className="absolute h-0 w-0">
        <defs>
          <linearGradient id="finderb" x1="0" y1="0" x2="0" y2="1">
            <stop offset="0" stopColor="#25cbfb" />
            <stop offset="1" stopColor="#1f68f2" />
          </linearGradient>
          <linearGradient id="blue" x1="0" y1="0" x2="0" y2="1">
            <stop offset="0" stopColor="#54bdf6" />
            <stop offset="1" stopColor="#1a86fb" />
          </linearGradient>
          <linearGradient id="silver" x1="0" y1="0" x2="0" y2="1">
            <stop offset="0" stopColor="#cfdce2" />
            <stop offset="1" stopColor="#757677" />
          </linearGradient>
          <linearGradient id="ghp" x1="0" y1="0" x2="0" y2="1">
            <stop offset="0" stopColor="#a84bab" />
            <stop offset="1" stopColor="#46307f" />
          </linearGradient>
          <linearGradient id="itun" x1="0.300" y1="0" x2="0.500" y2="1">
            <stop offset="0" stopColor="#fb4a50" />
            <stop offset="0.400" stopColor="#e557a4" />
            <stop offset="0.750" stopColor="#7c63f5" />
            <stop offset="1" stopColor="#30b9f6" />
          </linearGradient>
          <radialGradient id="saf">
            <stop offset="0" stopColor="#22c4ef" />
            <stop offset="1" stopColor="#1b6fe8" />
          </radialGradient>
          <linearGradient id="can" x1="0" y1="0" x2="1" y2="0">
            <stop offset="0" stopColor="#efefef" />
            <stop offset="0.500" stopColor="#cfcfd0" />
            <stop offset="1" stopColor="#ededed" />
          </linearGradient>
        </defs>
      </svg>
      <div className="ml-[8px] flex">
        {apps.map((a, i) => (
          <svg key={i} className="h-[126px] w-[101.500px] drop-shadow-[0_1px_1px_rgba(0,0,0,0.35)]" viewBox="-50.750 1474 101.500 126">
            {a.node}
            {a.dot && <circle cx="-1" cy="1592" r="4" fill={i < 8 ? "#5a1c08" : "#6c6c6c"} />}
          </svg>
        ))}
      </div>
      <div className="mt-[16px] mr-[19px] ml-[23px] h-[94px] w-[2px] bg-[#bdbcbe]" />
      <div className="flex">
        {minimized.map((n, i) => (
          <svg key={i} className="h-[126px] w-[101.600px]" viewBox="-50.800 1474 101.600 126">
            {n}
          </svg>
        ))}
      </div>
    </div>
  );
}

function Wallpaper() {
  return (
    <svg className="absolute inset-0 h-[1600px] w-[2560px]" viewBox="0 0 2560 1600">
      <defs>
        <linearGradient id="wood" gradientUnits="userSpaceOnUse" x1="0" y1="0" x2="2560" y2="0">
          <stop offset="0" stopColor="#8a5c4e" />
          <stop offset="0.040" stopColor="#84503c" />
          <stop offset="0.120" stopColor="#a04c1c" />
          <stop offset="0.300" stopColor="#b0601c" />
          <stop offset="0.940" stopColor="#5e3206" />
          <stop offset="0.965" stopColor="#9c5a0c" />
          <stop offset="0.985" stopColor="#c8780e" />
          <stop offset="1" stopColor="#a8640c" />
        </linearGradient>
        <linearGradient id="woodfade" x1="0" y1="0" x2="0" y2="1">
          <stop offset="0" stopColor="#2a1a04" stopOpacity="0.500" />
          <stop offset="0.500" stopColor="#2a1a04" stopOpacity="0.100" />
          <stop offset="1" stopColor="#1c1410" stopOpacity="0.450" />
        </linearGradient>
        <filter id="grain" x="0" y="0" width="100%" height="100%">
          <feTurbulence type="fractalNoise" baseFrequency="0.030 0.300" numOctaves="4" seed="4" />
          <feColorMatrix values="0 0 0 0 0.060  0 0 0 0 0.040  0 0 0 0 0.020  4 0 0 0 -1.800" />
        </filter>
      </defs>
      <rect width="2560" height="1600" fill="#5d6f84" />
      <rect y="1440" width="2560" height="160" fill="url(#wood)" />
      <rect y="1440" width="2560" height="160" filter="url(#grain)" opacity="0.750" />
      <rect y="1460" width="2560" height="140" fill="url(#woodfade)" />
    </svg>
  );
}

export default function App() {
  return (
    <div className="relative h-[1600px] w-[2560px] overflow-hidden font-['Inter','Noto_Sans',sans-serif] antialiased">
      <Wallpaper />
      <MenuBar />
      <div className="absolute top-[1440px] left-[872px] h-[40px] w-[1540px] border-x border-[#777] bg-[#b4b4b4]">
        <div className="mt-[31px] h-[2px] bg-[#7d7d7d]" />
      </div>
      <div className="relative h-[1418px] overflow-hidden rounded-[10px] border-b-2 border-[#8d8d8d] bg-white">
        <Toolbar />
        <TabBar />
        <Page />
      </div>
      <Phone />
      <div className="absolute top-[1437px] left-[1620px] flex h-[58px] w-[234px] items-center justify-center rounded-[8px] bg-[#1a1a1a] text-[26px] font-medium tracking-[-0.1px] text-[#c2c2c2] shadow-[0_0_0_2px_rgba(190,190,190,0.7)]">
        iPhone X - 11.2
      </div>
      <Dock />
    </div>
  );
}
